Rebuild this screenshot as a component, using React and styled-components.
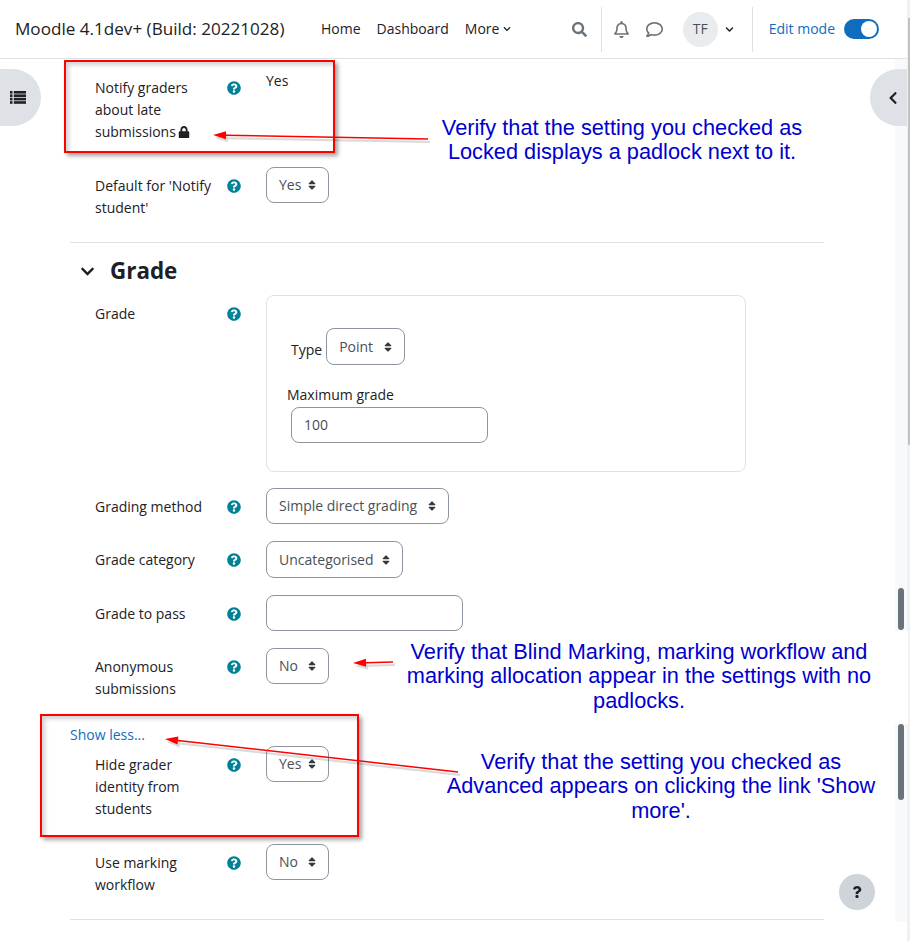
import React from "react";
import styled, { createGlobalStyle } from "styled-components";
import {
  FaChevronDown,
  FaChevronLeft,
  FaLock,
  FaQuestion,
  FaQuestionCircle,
  FaRegBell,
  FaRegComment,
  FaSearch,
  FaSort,
} from "react-icons/fa";

const GlobalStyle = createGlobalStyle`
  html, body {
    margin: 0;
    padding: 0;
    background: #fff;
  }
  body {
    font-family: "Open Sans", "Liberation Sans", sans-serif;
    font-size: 14px;
    line-height: 22px;
    color: #1d2125;
  }
`;

const Page = styled.div`
  position: relative;
  width: 910px;
  height: 941px;
  overflow: hidden;
`;

const Header = styled.header`
  display: flex;
  align-items: center;
  width: 907px;
  height: 58px;
  border-bottom: 1px solid #dee2e6;
  box-sizing: content-box;
`;

const Brand = styled.div`
  width: 306px;
  padding-left: 15px;
  font-size: 17.1px;
  white-space: nowrap;
`;

const NavLink = styled.span`
  display: flex;
  align-items: center;
  gap: 4px;
  margin-right: 16px;
  white-space: nowrap;
`;

const Spacer = styled.div`
  flex: 1;
`;

const IconSlot = styled.span`
  display: flex;
  width: ${(p) => p.$w}px;
  justify-content: center;
  color: ${(p) => p.$color || "#6a737b"};
  font-size: ${(p) => p.$size || 16}px;
`;

const Divider = styled.div`
  width: 1px;
  height: 45px;
  background: #dee2e6;
`;

const Avatar = styled.div`
  display: flex;
  align-items: center;
  justify-content: center;
  width: 35px;
  height: 35px;
  border-radius: 50%;
  background: #e9ecef;
  color: #495057;
`;

const EditLabel = styled.span`
  margin-left: 16px;
  margin-right: 9px;
  color: #0f6cbf;
  white-space: nowrap;
`;

const Toggle = styled.div`
  display: flex;
  justify-content: flex-end;
  align-items: center;
  width: 35px;
  height: 20px;
  margin-right: 28px;
  padding-right: 2px;
  box-sizing: border-box;
  border-radius: 10px;
  background: #0f6cbf;
`;

const Knob = styled.div`
  width: 16px;
  height: 16px;
  border-radius: 50%;
  background: #fff;
`;

const Content = styled.main`
  width: 754px;
  margin-left: 70px;
  padding-top: 10px;
`;

const Row = styled.div`
  display: grid;
  grid-template-columns: 132px 39px auto;
  padding-left: 25px;
  margin-bottom: ${(p) => p.$mb}px;
`;

const Label = styled.div`
  padding: 8px 7px 0 0;
`;

const Help = styled.div`
  display: flex;
  padding-top: 12px;
  color: #008196;
  font-size: 14px;
`;

const StaticValue = styled.div`
  padding-top: 1px;
`;

const LockIcon = styled(FaLock)`
  margin-left: 2px;
  font-size: 12px;
  vertical-align: -1px;
`;

const Select = styled.div`
  display: flex;
  align-items: center;
  justify-content: space-between;
  width: ${(p) => p.$w}px;
  height: ${(p) => p.$h || 36}px;
  padding: 0 10px 0 12px;
  box-sizing: border-box;
  border: 1px solid #8f959e;
  border-radius: 8px;
  color: #495057;
  white-space: nowrap;
  svg {
    flex: none;
    font-size: 12px;
    color: #343a40;
  }
`;

const TextInput = styled.div`
  display: flex;
  align-items: center;
  width: ${(p) => p.$w}px;
  height: 36px;
  padding-left: 12px;
  box-sizing: border-box;
  border: 1px solid #8f959e;
  border-radius: 8px;
  color: #495057;
  margin-top: ${(p) => p.$mt || 0}px;
`;

const Rule = styled.hr`
  height: 1px;
  margin: 0 0 ${(p) => p.$mb}px;
  border: 0;
  background: #dee2e6;
`;

const SectionTitle = styled.h3`
  display: flex;
  align-items: center;
  margin: 0 0 10px;
  height: 28px;
  font-size: 22.4px;
  font-weight: 700;
  line-height: 28px;
  svg {
    width: 15px;
    height: 15px;
    margin: 0 15px 0 10px;
  }
`;

const GroupBox = styled.div`
  width: 480px;
  height: 177px;
  padding: 32px 0 0 24px;
  box-sizing: border-box;
  border: 1px solid #dee2e6;
  border-radius: 8px;
`;

const TypeLine = styled.div`
  display: flex;
  gap: 4px;
`;

const TypeLabel = styled.span`
  padding-top: 11px;
`;

const GroupCaption = styled.div`
  margin: 19px 0 0 -4px;
`;

const ShowLess = styled.div`
  color: #0f6cbf;
`;

const Tab = styled.div`
  position: absolute;
  top: 69px;
  display: flex;
  align-items: center;
  width: ${(p) => p.$w}px;
  height: 57px;
  background: #dee2e6;
  color: #1d2125;
  ${(p) =>
    p.$side === "left"
      ? "left: 0; justify-content: flex-end; padding-right: 15px; border-radius: 0 28.5px 28.5px 0;"
      : "left: 870px; padding-left: 16px; border-radius: 28.5px 0 0 28.5px;"}
  box-sizing: border-box;
`;

const ScrollTrack = styled.div`
  position: absolute;
  top: 59px;
  left: 895px;
  width: 12px;
  height: 863px;
  background: #f8f9fa;
`;

const ScrollThumb = styled.div`
  position: absolute;
  left: 898px;
  top: ${(p) => p.$top}px;
  width: 6px;
  height: ${(p) => p.$h}px;
  border-radius: 3px;
  background: #6a737b;
`;

const WindowStrip = styled.div`
  position: absolute;
  top: 0;
  left: 907px;
  width: 3px;
  height: 941px;
  background: #f1f1f1;
`;

const WindowThumb = styled.div`
  position: absolute;
  top: 18px;
  left: 908px;
  width: 2px;
  height: 427px;
  background: #c1c1c1;
`;

const HelpButton = styled.div`
  position: absolute;
  left: 839px;
  top: 874px;
  display: flex;
  align-items: center;
  justify-content: center;
  width: 36px;
  height: 36px;
  border-radius: 50%;
  background: #ced4da;
  color: #1d2125;
  font-size: 12px;
`;

const PastedPatch = styled.div`
  position: absolute;
  left: 370px;
  top: 631px;
  width: 538px;
  height: 93px;
  background: #fff;
`;

const RedBox = styled.div`
  position: absolute;
  left: ${(p) => p.$x}px;
  top: ${(p) => p.$y}px;
  width: ${(p) => p.$w}px;
  height: ${(p) => p.$h}px;
  box-sizing: border-box;
  border: 2px solid #f00;
  box-shadow: 3px 3px 4px rgba(0, 0, 0, 0.35), inset 3px 3px 4px rgba(0, 0, 0, 0.18);
`;

const Note = styled.div`
  position: absolute;
  left: ${(p) => p.$x}px;
  top: ${(p) => p.$y}px;
  width: ${(p) => p.$w}px;
  font-family: "Liberation Sans", Arial, sans-serif;
  font-size: 21.75px;
  line-height: 24.4px;
  text-align: center;
  color: #0000cd;
`;

const ArrowLayer = styled.svg`
  position: absolute;
  left: 0;
  top: 0;
  pointer-events: none;
`;

// the old four-row list glyph, react-icons only has the three-row one
const ListIcon = () => (
  <svg width="16" height="13" viewBox="0 0 16 13" fill="currentColor">
    {[0, 3.4, 6.8, 10.2].map((y) => (
      <g key={y}>
        <rect x="0" y={y} width="2.5" height="2.6" />
        <rect x="3.8" y={y} width="12.2" height="2.6" />
      </g>
    ))}
  </svg>
);

// tail -> tip, tips are filled triangles with a soft grey shadow under them
const Arrow = ({ x1, y1, x2, y2 }) => {
  const angle = Math.atan2(y2 - y1, x2 - x1);
  const len = 13;
  const wing = 4;
  const bx = x2 - Math.cos(angle) * len;
  const by = y2 - Math.sin(angle) * len;
  const nx = -Math.sin(angle) * wing;
  const ny = Math.cos(angle) * wing;
  const tip = `${x2},${y2} ${bx + nx},${by + ny} ${bx - nx},${by - ny}`;
  return (
    <g>
      <g transform="translate(2 3)" opacity="0.14" fill="#000" stroke="#000">
        <line x1={x1} y1={y1} x2={bx} y2={by} strokeWidth="2" />
        <polygon points={tip} stroke="none" />
      </g>
      <line x1={x1} y1={y1} x2={bx} y2={by} stroke="#f00" strokeWidth="1.5" />
      <polygon points={tip} fill="#f00" />
    </g>
  );
};

const YES_NO_WIDTH = 63;

const App = () => {
  return (
    <Page>
      <GlobalStyle />
      <Header>
        <Brand>Moodle 4.1dev+ (Build: 20221028)</Brand>
        <NavLink>Home</NavLink>
        <NavLink>Dashboard</NavLink>
        <NavLink>
          More <FaChevronDown size={8} />
        </NavLink>
        <Spacer />
        <IconSlot $w={42} $size={15}>
          <FaSearch />
        </IconSlot>
        <Divider />
        <IconSlot $w={40} $size={17}>
          <FaRegBell />
        </IconSlot>
        <IconSlot $w={25} $size={17}>
          <FaRegComment />
        </IconSlot>
        <IconSlot $w={16} />
        <Avatar>TF</Avatar>
        <IconSlot $w={24} $size={9} $color="#1d2125">
          <FaChevronDown />
        </IconSlot>
        <IconSlot $w={10} />
        <Divider />
        <EditLabel>Edit mode</EditLabel>
        <Toggle>
          <Knob />
        </Toggle>
      </Header>

      <Content>
        <Row $mb={24}>
          <Label>
            Notify graders about late submissions
            <LockIcon />
          </Label>
          <Help>
            <FaQuestionCircle />
          </Help>
          <StaticValue>Yes</StaticValue>
        </Row>
        <Row $mb={23}>
          <Label>Default for 'Notify student'</Label>
          <Help>
            <FaQuestionCircle />
          </Help>
          <Select $w={YES_NO_WIDTH}>
            Yes <FaSort />
          </Select>
        </Row>
        <Rule $mb={14} />
        <SectionTitle>
          <FaChevronDown />
          Grade
        </SectionTitle>
        <Row $mb={16}>
          <Label>Grade</Label>
          <Help>
            <FaQuestionCircle />
          </Help>
          <GroupBox>
            <TypeLine>
              <TypeLabel>Type</TypeLabel>
              <Select $w={79} $h={37}>
                Point <FaSort />
              </Select>
            </TypeLine>
            <GroupCaption>Maximum grade</GroupCaption>
            <TextInput $w={197} $mt={1}>
              100
            </TextInput>
          </GroupBox>
        </Row>
        <Row $mb={17}>
          <Label>Grading method</Label>
          <Help>
            <FaQuestionCircle />
          </Help>
          <Select $w={183}>
            Simple direct grading <FaSort />
          </Select>
        </Row>
        <Row $mb={17}>
          <Label>Grade category</Label>
          <Help>
            <FaQuestionCircle />
          </Help>
          <Select $w={137} $h={37}>
            Uncategorised <FaSort />
          </Select>
        </Row>
        <Row $mb={17}>
          <Label>Grade to pass</Label>
          <Help>
            <FaQuestionCircle />
          </Help>
          <TextInput $w={197} />
        </Row>
        <Row $mb={24}>
          <Label>Anonymous submissions</Label>
          <Help>
            <FaQuestionCircle />
          </Help>
          <Select $w={YES_NO_WIDTH}>
            No <FaSort />
          </Select>
        </Row>
        <ShowLess>Show less...</ShowLess>
        <Row $mb={24}>
          <Label>Hide grader identity from students</Label>
          <Help>
            <FaQuestionCircle />
          </Help>
          <Select $w={YES_NO_WIDTH}>
            Yes <FaSort />
          </Select>
        </Row>
        <Row $mb={23}>
          <Label>Use marking workflow</Label>
          <Help>
            <FaQuestionCircle />
          </Help>
          <Select $w={YES_NO_WIDTH}>
            No <FaSort />
          </Select>
        </Row>
        <Rule $mb={0} />
      </Content>

      <ScrollTrack />
      <ScrollThumb $top={588} $h={42} />
      <ScrollThumb $top={724} $h={76} />
      <WindowStrip />
      <WindowThumb />
      <Tab $side="left" $w={41}>
        <ListIcon />
      </Tab>
      <Tab $side="right" $w={37}>
        <FaChevronLeft size={14} />
      </Tab>
      <HelpButton>
        <FaQuestion />
      </HelpButton>

      <PastedPatch />
      <RedBox $x={64} $y={60} $w={271} $h={93} />
      <RedBox $x={40} $y={714} $w={319} $h={123} />
      <Note $x={400} $y={116} $w={444}>
        Verify that the setting you checked as
        <br />
        Locked displays a padlock next to it.
      </Note>
      <Note $x={400} $y={640} $w={478}>
        Verify that Blind Marking, marking workflow and
        <br />
        marking allocation appear in the settings with no
        <br />
        padlocks.
      </Note>
      <Note $x={440} $y={750} $w={442}>
        Verify that the setting you checked as
        <br />
        Advanced appears on clicking the link 'Show
        <br />
        more'.
      </Note>
      <ArrowLayer width="910" height="941">
        <Arrow x1={428} y1={139} x2={213} y2={135} />
        <Arrow x1={393} y1={662} x2={353} y2={663} />
        <Arrow x1={458} y1={772} x2={165} y2={739} />
      </ArrowLayer>
    </Page>
  );
};

export default App;
